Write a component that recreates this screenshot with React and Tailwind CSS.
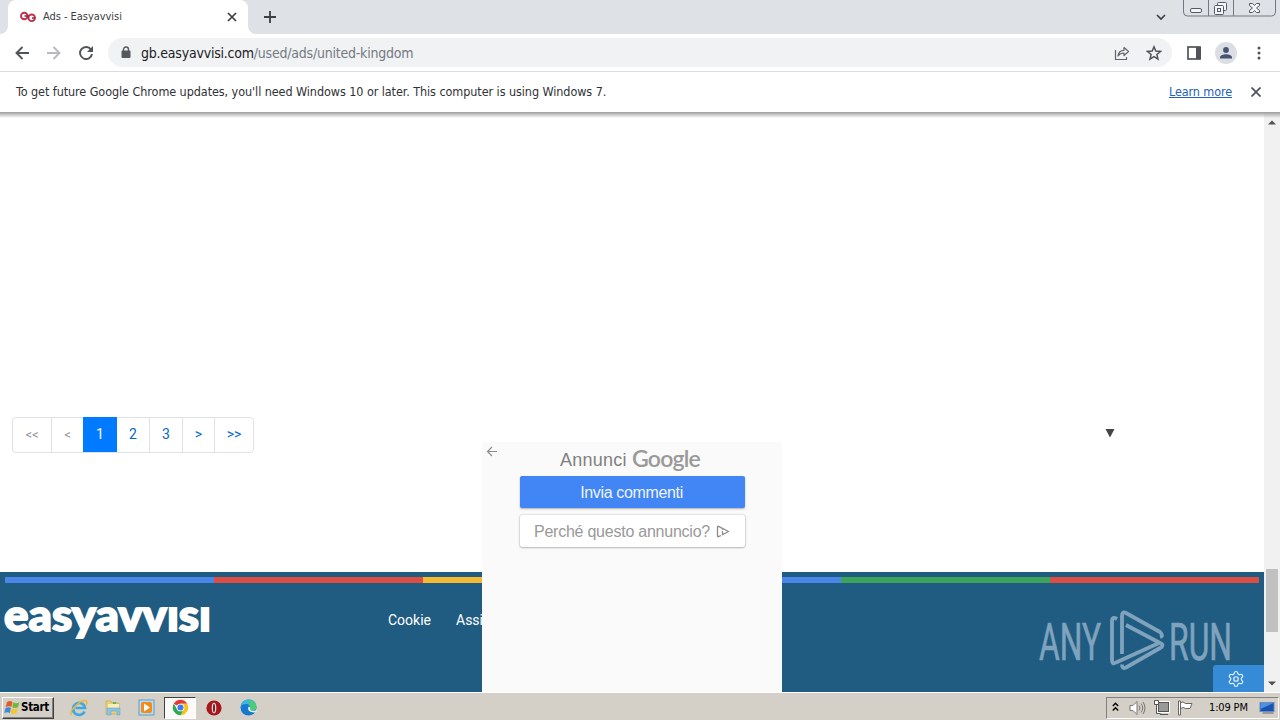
import { Settings } from "lucide-react";

const pages = [
  { label: "<<", cls: "w-[38px] text-[#8d9298] text-[13px]" },
  { label: "<", cls: "w-[32px] text-[#8d9298] text-[13px] border-l border-[#dee2e6]" },
  { label: "1", cls: "w-[34px] text-white bg-[#007bff] -my-px" },
  { label: "2", cls: "w-[32px] text-[#0069c8]" },
  { label: "3", cls: "w-[33px] text-[#0069c8] border-l border-[#dee2e6]" },
  { label: ">", cls: "w-[32px] text-[#0069c8] text-[14px] border-l border-[#dee2e6]" },
  { label: ">>", cls: "w-[39px] text-[#0069c8] text-[14px] border-l border-[#dee2e6]" },
];

const stripes = [
  "bg-[#4a86e8]",
  "bg-[#dc4e41]",
  "bg-[#f4b931]",
  "bg-[#4a86e8]",
  "bg-[#3da35a]",
  "bg-[#dc4e41]",
];

function TabStrip() {
  return (
    <div className="flex h-[34px] shrink-0 bg-[#dee1e6]">
      <div className="flex w-2 items-end bg-white">
        <div className="h-full w-2 rounded-br-lg bg-[#dee1e6]" />
      </div>
      <div className="flex w-[240px] items-center rounded-t-lg bg-white pl-3">
        <svg width="16" height="12" viewBox="0 0 16 12" fill="none" stroke="#c5304a" strokeWidth="1.9">
          <circle cx="4.300" cy="5" r="3.300" />
          <circle cx="11.700" cy="6.800" r="3.300" />
          <path d="M4.500 5h3.500v2M12 7h3" stroke="#7c3040" strokeWidth="1.300" />
        </svg>
        <span className="ml-[7px] w-[184px] text-[11px] tracking-[-0.05px] text-[#3c4043]">Ads - Easyavvisi</span>
        <svg width="10" height="10" viewBox="0 0 10 10" stroke="#3c4043" strokeWidth="1.7">
          <path d="M1 1l8 8M9 1L1 9" />
        </svg>
      </div>
      <div className="w-2 bg-white">
        <div className="h-full w-2 rounded-bl-lg bg-[#dee1e6]" />
      </div>
      <svg className="ml-2 mt-[11px]" width="12" height="12" viewBox="0 0 12 12" stroke="#3c4043" strokeWidth="1.8">
        <path d="M6 0v12M0 6h12" />
      </svg>
      <svg className="ml-auto mr-[17px] mt-[14px]" width="10" height="7" viewBox="0 0 10 7" fill="none" stroke="#3c4043" strokeWidth="1.7">
        <path d="M1 1l4 4 4-4" />
      </svg>
      <svg className="mr-1" width="93" height="18" viewBox="0 0 93 18" fill="none" stroke="#737882">
        <path d="M.5 0v12q0 4 4 4h84q4 0 4-4V0M25.500 0v16M50.500 0v16" />
        <rect x="7.500" y="8.500" width="11" height="4" rx="1.500" fill="#f4f5f7" stroke="#555b66" />
        <g fill="#f4f5f7" stroke="#555b66">
          <rect x="34.500" y="2.500" width="9" height="8" rx="1" />
          <rect x="31.500" y="5.500" width="9" height="9" rx="1" />
          <rect x="34.500" y="8.500" width="3" height="3" />
          <path d="M66.500 3.500h3l2 2 2-2h3v2l-3 2.500 3 2.500v2h-3l-2-2-2 2h-3v-2l3-2.500-3-2.500z" />
        </g>
      </svg>
    </div>
  );
}

function Toolbar() {
  return (
    <div className="flex h-[38px] shrink-0 items-center border-b border-[#dadce0] bg-white">
      <svg className="ml-[15px]" width="14" height="14" viewBox="0 0 14 14" fill="none" stroke="#50545a" strokeWidth="1.900">
        <path d="M14 7H1.500M7.500 1l-6 6 6 6" />
      </svg>
      <svg className="ml-[18px]" width="14" height="14" viewBox="0 0 14 14" fill="none" stroke="#b8babd" strokeWidth="1.900">
        <path d="M0 7h12.500M6.500 1l6 6-6 6" />
      </svg>
      <svg className="ml-[18px]" width="14" height="14" viewBox="0 0 14 14" fill="none" stroke="#50545a" strokeWidth="1.900">
        <path d="M12 3.600A6 6 0 1 0 13 8" />
        <path d="M14 0v6H8z" fill="#50545a" stroke="none" />
      </svg>
      <div className="ml-[15px] flex h-[29px] w-[1064px] items-center rounded-full bg-[#f0f2f4] pl-[13px]">
        <svg width="10" height="13" viewBox="0 0 10 13">
          <rect x="0.500" y="4.500" width="9" height="7.500" rx="1" fill="#55595e" />
          <path d="M2.500 5V3.500a2.500 2.500 0 0 1 5 0V5" fill="none" stroke="#55595e" strokeWidth="1.400" />
        </svg>
        <span className="ml-[10px] mt-px whitespace-nowrap text-[14px] tracking-[-0.220px] text-[#757a80]">
          <span className="text-[#202124]">gb.easyavvisi.com</span>/used/ads/united-kingdom
        </span>
        <svg className="ml-auto" width="16" height="16" viewBox="0 0 16 16" fill="none" stroke="#5f6368" strokeWidth="1.200">
          <path d="M1.500 5v9.500h11V12" />
          <path d="M4 11c.500-3.800 2.800-5.700 6-5.700V2.500l4.500 4-4.500 4V8c-2.700 0-4.500.800-6 3z" strokeLinejoin="round" />
        </svg>
        <svg className="ml-4 mr-[10px]" width="16" height="16" viewBox="0 0 16 16" fill="none" stroke="#50545a" strokeWidth="1.500">
          <path d="M8 1.800l1.800 4.300 4.700.400-3.600 3 1.100 4.600L8 11.700l-4 2.400 1.100-4.600-3.600-3 4.700-.400z" />
        </svg>
      </div>
      <svg className="ml-[15px]" width="14" height="14" viewBox="0 0 14 14">
        <rect x="1" y="1" width="12" height="12" fill="none" stroke="#50545a" strokeWidth="1.700" />
        <path d="M9 1h5v12H9z" fill="#50545a" />
      </svg>
      <svg className="ml-[14px]" width="22" height="22" viewBox="0 0 22 22">
        <circle cx="11" cy="11" r="11" fill="#dbdee3" />
        <circle cx="11" cy="8" r="2.900" fill="#475472" />
        <path d="M5 16.500v-1.200c0-2 3.500-3.100 6-3.100s6 1.100 6 3.100v1.200z" fill="#475472" />
      </svg>
      <svg className="ml-5" width="4" height="14" viewBox="0 0 4 14" fill="#50545a">
        <circle cx="2" cy="2" r="1.500" />
        <circle cx="2" cy="7" r="1.500" />
        <circle cx="2" cy="12" r="1.500" />
      </svg>
    </div>
  );
}

function InfoBar() {
  return (
    <div className="flex h-10 shrink-0 items-center bg-white pl-4 text-[12.5px] text-[#303236]">
      <span className="tracking-[-0.070px]">
        To get future Google Chrome updates, you'll need Windows 10 or later. This computer is using Windows 7.
      </span>
      <span className="ml-auto tracking-[-0.100px] text-[#2462b5] underline">Learn more</span>
      <svg className="ml-[19px] mr-[19px]" width="10" height="10" viewBox="0 0 10 10" stroke="#50545a" strokeWidth="1.800">
        <path d="M.5.5l9 9M9.500.5l-9 9" />
      </svg>
    </div>
  );
}

function AdPanel() {
  return (
    <div className="absolute bottom-0 left-[482px] h-[250px] w-[300px] bg-[#fafafa] font-['Liberation_Sans',sans-serif]">
      <svg className="absolute left-[4px] top-[4px]" width="12" height="11" viewBox="0 0 12 11" fill="none" stroke="#8d8d8d" strokeWidth="1.200">
        <path d="M11 5.500H1.500M6 1L1.500 5.500 6 10" />
      </svg>
      <div className="flex flex-col items-center">
        <div className="mr-[3px] flex h-[34px] w-[141px] items-center whitespace-nowrap text-[#808080]">
          <span className="mt-0.5 w-[72px] text-[18px] tracking-[0.250px]">Annunci</span>
          <span className="-mt-[2px] font-['Lato',sans-serif] text-[23px] font-semibold tracking-[-0.800px] text-[#999]">Google</span>
        </div>
        <div className="ml-px flex h-8 w-[225px] items-center justify-center rounded-[2px] bg-[#4285f4] pr-0.5 pt-0.5 text-[16px] tracking-[-0.350px] text-[#eef4ff] shadow-[0_1px_2px_rgba(0,0,0,0.3)]">
          Invia commenti
        </div>
        <div className="ml-px mt-[7px] flex h-8 w-[225px] items-center rounded-[2px] bg-white pl-[14px] text-[16px] tracking-[-0.240px] text-[#999] shadow-[0_0_2px_rgba(0,0,0,0.3),0_1px_2px_rgba(0,0,0,0.2)]">
          <span className="w-[182px] whitespace-nowrap pt-0.5">Perché questo annuncio?</span>
          <svg width="14" height="13" viewBox="0 0 14 13" fill="none" stroke="#8a8a8a" strokeWidth="1.300" strokeLinejoin="round">
            <path d="M5 10.500l-2.500 1.200q-1 .300-1-1V2.300q0-1.300 1-1L12.500 6.500 6.500 9.700V6M6.500 3.800v1" />
          </svg>
        </div>
      </div>
    </div>
  );
}

function Watermark() {
  return (
    <div className="absolute left-[1038px] top-[496px] font-['Roboto',sans-serif]">
      <svg className="overflow-visible" width="200" height="66" viewBox="0 0 200 66" fill="none" stroke="#7fa3bd" strokeWidth="3.800" strokeLinejoin="round">
        <g fill="#7fa3bd" strokeWidth=".7" fontSize="52">
          <text x="1" y="51.500" textLength="62" lengthAdjust="spacingAndGlyphs">ANY</text>
          <text x="131" y="51.500" textLength="63" lengthAdjust="spacingAndGlyphs">RUN</text>
        </g>
        <path d="M79 11Q74 8 74 13V52q0 5 4 2.500L121 35" />
        <path d="M84 46V8q0-5 4-3l34 19q4 4 0 5" />
        <path d="M88 17l34 18q5 2 0 5L88 59.500q-4 2-4-3" />
      </svg>
    </div>
  );
}

function Page() {
  return (
    <div className="relative flex h-[580px] shrink-0 overflow-hidden bg-white">
      <div className="flex w-[1264px] flex-col">
        <div className="flex h-[460px] shrink-0 items-start justify-between pl-3 pr-[149px] pt-[305px]">
          <div className="flex h-9 rounded border border-[#dee2e6] pb-px font-['Roboto',sans-serif] text-[14px]">
            {pages.map((p) => (
              <div key={p.label} className={`-mb-px flex items-center justify-center pb-px ${p.cls}`}>
                {p.label}
              </div>
            ))}
          </div>
          <svg className="mt-3" width="10" height="9" viewBox="0 0 10 9">
            <path d="M.5 0h9L5 8.500z" fill="#444" />
          </svg>
        </div>
        <div className="flex h-[120px] shrink-0 flex-col bg-[#205c82] px-[5px] pt-[5px] text-white">
          <div className="flex h-[6px]">
            {stripes.map((s, i) => (
              <div key={i} className={`w-[209px] ${s}`} />
            ))}
          </div>
          <div className="flex h-[74px] items-center">
            <div className="-ml-0.5 w-[385px]">
              <svg className="overflow-visible" width="212" height="44" viewBox="0 0 212 44">
                <text x="1" y="33" textLength="207" lengthAdjust="spacingAndGlyphs" fill="white" stroke="white" strokeWidth="1.800" fontFamily="Lato, sans-serif" fontWeight="900" fontSize="43">easyavvısı</text>
              </svg>
            </div>
            <span className="w-[68px] font-['Roboto',sans-serif] text-[14px]">Cookie</span>
            <span className="font-['Roboto',sans-serif] text-[14px]">Assistenza</span>
          </div>
        </div>
      </div>
      <div className="flex w-4 flex-col items-center bg-[#f1f1f1] pt-2">
        <svg width="8" height="5" viewBox="0 0 8 5"><path d="M0 4.500h8L4 .5z" fill="#505050" /></svg>
        <div className="mt-[444px] h-[63px] w-3 bg-[#c1c1c1]" />
        <svg className="mt-[49px]" width="8" height="5" viewBox="0 0 8 5"><path d="M0 .5h8L4 4.500z" fill="#505050" /></svg>
      </div>
      <AdPanel />
      <div className="absolute bottom-0 left-[1213px] flex h-[27px] w-[51px] items-center justify-center rounded-tl-[3px] bg-[#368bd6] pr-[5px]">
        <Settings size={18} strokeWidth={1.600} color="#e2f2ff" />
      </div>
      <Watermark />
      {/* shadow the info bar casts over page and scrollbar */}
      <div className="absolute inset-x-0 top-0 h-1.5 bg-linear-to-b from-[#9c9c9c] to-transparent" />
    </div>
  );
}

function Taskbar() {
  return (
    <div className="flex h-7 shrink-0 items-center border-t border-white bg-[#d4d0c8] pt-0.5 text-black">
      <div className="ml-0.5 flex h-[22px] w-[52px] items-center border border-b-[#404040] border-l-white border-r-[#404040] border-t-white pl-px text-[11.500px] font-bold tracking-[-0.300px] shadow-[inset_-1px_-1px_0_#808080]">
        <svg width="17" height="17" viewBox="0 0 17 17">
          <path d="M3 3q3-2 5.500 0L7.300 8Q5 6.500 1.700 8z" fill="#e65b22" />
          <path d="M9.300 3.300Q12 5 15.500 3.300L14 8.300q-3 1.500-5.700 0z" fill="#70b83a" />
          <path d="M1.500 8.900q3-1.500 5.500 0L5.800 14Q3.500 12.500.3 14z" fill="#3d8ad9" />
          <path d="M7.900 9.300q3 1.700 5.900 0L12.500 14q-3 1.800-5.900.200z" fill="#f6c62f" />
        </svg>
        Start
      </div>
      <svg className="ml-[16px]" width="18" height="18" viewBox="0 0 18 18" fill="none">
        <path d="M14.500 12.500A6 6 0 1 1 15 9H5.500" stroke="#43a8df" strokeWidth="2.700" />
        <path d="M1.500 16Q-1 13 6 6.500T16.500 2Q18 3 16 6" stroke="#e8b936" strokeWidth="1.400" />
      </svg>
      <svg className="ml-[16px]" width="18" height="18" viewBox="0 0 18 18">
        <path d="M2 2h5l1 2h7v11H2z" fill="#e9cf75" stroke="#c9a94d" strokeWidth=".7" />
        <path d="M4 5h11v4H4z" fill="#f8eeb8" />
        <path d="M9 3h3v2H9z" fill="#65b35f" />
        <path d="M3 9h13v7h-3v-4H7v4H3z" fill="#8bc2e2" stroke="#6ca8cf" strokeWidth=".6" />
      </svg>
      <svg className="ml-[16px]" width="17" height="17" viewBox="0 0 17 17">
        <rect x="1" y="1" width="15" height="15" fill="#b8dcf2" stroke="#5b9bc7" />
        <rect x="3" y="3" width="11" height="11" rx="2" fill="#f28a1c" />
        <path d="M6 4.500l6 4-6 4z" fill="#fff" />
      </svg>
      <div className="ml-[9px] flex h-[22px] w-[32px] items-center justify-center border border-b-white border-l-[#404040] border-r-white border-t-[#404040] bg-[#fbfaf8]">
        <svg width="17" height="17" viewBox="0 0 18 18">
          <path d="M9 9L1.900 4.900A8.200 8.200 0 0 1 16.100 4.900H9z" fill="#e33b2e" />
          <path d="M9 4.900h7.100A8.200 8.200 0 0 1 9 17.200L12.500 11z" fill="#fbc116" />
          <path d="M1.900 4.900A8.200 8.200 0 0 0 9 17.200L12.500 11 9 13 5.500 11z" fill="#2da94f" />
          <circle cx="9" cy="9" r="4.100" fill="#fff" />
          <circle cx="9" cy="9" r="3.200" fill="#3b7de9" />
        </svg>
      </div>
      <svg className="ml-[10px]" width="16" height="16" viewBox="0 0 16 16">
        <circle cx="8" cy="8" r="7.600" fill="#a7161c" />
        <ellipse cx="8" cy="8" rx="2.300" ry="5.300" fill="#e9dcd8" />
        <ellipse cx="8" cy="8" rx="1" ry="4.300" fill="#80151a" />
      </svg>
      <svg className="ml-[18px]" width="17" height="17" viewBox="0 0 17 17">
        <circle cx="8.500" cy="8.500" r="8" fill="#1479cf" />
        <path d="M.8 7Q2 .5 9 .5T16.500 8q0 4-4.500 3.500-2.500-.500-2-2.500Q10 5 6 5 2.500 5 .8 7z" fill="#39b9d5" />
        <path d="M10 1q6.500 1.500 6.500 7 0 3.500-4.500 3.500-2.500-.500-2-2.500 1-2-1-3.500z" fill="#4ecb78" />
        <path d="M8.300 8q-1 4 3 5 3 1 5.200-.200 1-1.200.500-2-3 1.500-5.500.700-2-.500-1.200-2.500Q9.500 7 8.300 8z" fill="#e5eee8" />
      </svg>
      <div className="ml-auto mr-px flex h-[22px] w-[173px] items-center border border-b-white border-l-[#808080] border-r-white border-t-[#808080] pl-[5px]">
        <svg className="-mt-0.5" width="7" height="10" viewBox="0 0 7 10" fill="none" stroke="#000" strokeWidth="1.400">
          <path d="M.8 4l2.700-2.700L6.200 4M.8 8.500l2.700-2.700 2.700 2.700" />
        </svg>
        <svg className="ml-[10px]" width="17" height="16" viewBox="0 0 17 16" fill="none" stroke="#777">
          <path d="M1 5.500h3l4-4v13l-4-4H1z" fill="#fff" />
          <path d="M10 5.500q2 2.500 0 5M12 3.500q3.500 4.500 0 9M14 2q4 6 0 12" />
        </svg>
        <svg className="ml-[7px]" width="17" height="17" viewBox="0 0 17 17" fill="none" stroke="#555">
          <rect x="5.500" y="3.500" width="10" height="9" fill="#999" stroke="#fff" strokeWidth="3" />
          <rect x="5.500" y="3.500" width="10" height="9" fill="#999" />
          <path d="M1.500 1.500h4v4h-4z" fill="#fff" />
          <path d="M3.500 5.500v9h4M7 15.500h8" />
        </svg>
        <svg className="ml-[7px]" width="17" height="16" viewBox="0 0 17 16" fill="#fff" stroke="#666">
          <path d="M3.500 2.500Q6 1 8.500 3.500h6.500l-2 5H8.500q-2-2-5 0z" />
          <path d="M1.500 1h2v14h-2z" />
        </svg>
        <span className="ml-[15px] w-[50px] whitespace-nowrap pt-px text-[11px] tracking-[-0.150px]">1:09 PM</span>
        <svg width="16" height="14" viewBox="0 0 15 14">
          <rect x=".5" y="1.500" width="14" height="9" fill="#1653b4" stroke="#688bb8" />
          <path d="M1 2h13L1 8z" fill="#4f91df" />
          <path d="M3 12h11" stroke="#59616b" />
        </svg>
      </div>
    </div>
  );
}

export default function App() {
  return (
    <div className="flex h-[720px] w-[1280px] flex-col overflow-hidden font-['DejaVu_Sans_Condensed','Noto_Sans',sans-serif]">
      <TabStrip />
      <Toolbar />
      <InfoBar />
      <Page />
      <Taskbar />
    </div>
  );
}
